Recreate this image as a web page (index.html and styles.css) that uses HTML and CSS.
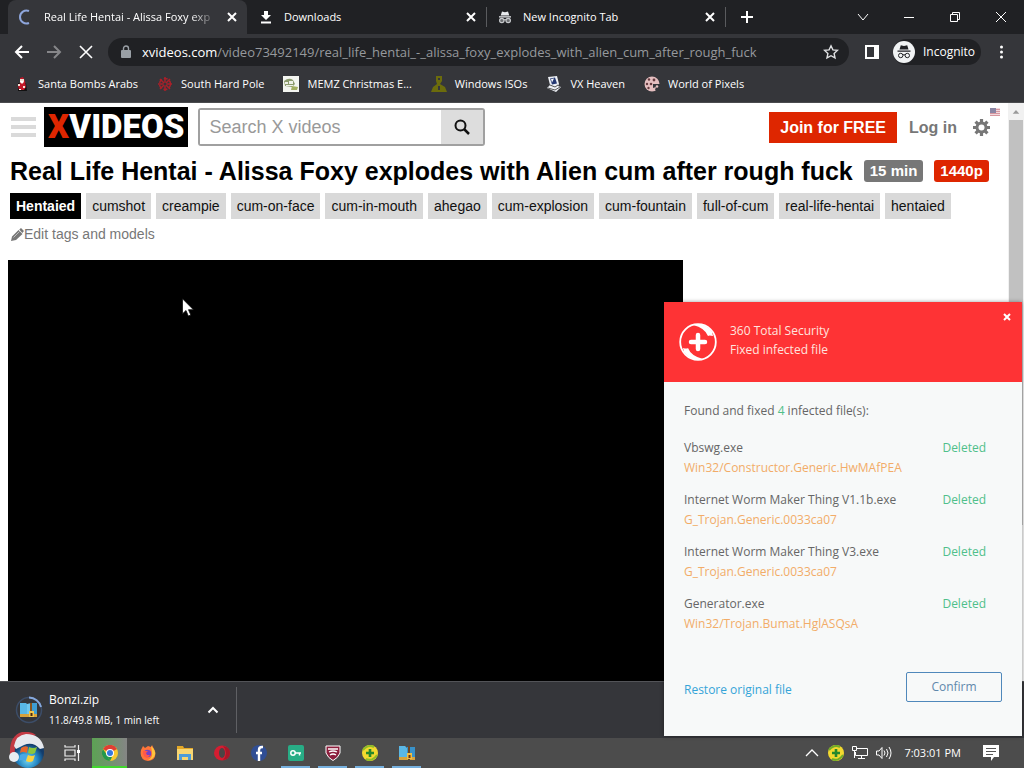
FILE: index.html
```html
<!DOCTYPE html>
<html lang="en">
<head>
<meta charset="utf-8">
<meta name="viewport" content="width=device-width, initial-scale=1">
<title>Real Life Hentai - Alissa Foxy</title>
<link rel="stylesheet" href="styles.css">
</head>
<body>
<header class="browser">
  <div class="tabs">
    <div class="tab tab-active">
      <svg class="ic" viewBox="0 0 16 16"><path d="M11 2A6.500 6.500 0 1 0 11 14" fill="none" stroke="#8ea6dc" stroke-width="2"/></svg>
      <span class="tab-title fade">Real Life Hentai - Alissa Foxy exp</span>
      <button class="x" aria-label="Close tab"><svg viewBox="0 0 10 10"><path d="M1 1l8 8M9 1L1 9"/></svg></button>
    </div>
    <div class="tab tab-second">
      <svg class="ic" viewBox="0 0 16 16"><path fill="#fff" d="M6 2h4v4h3l-5 5-5-5h3zM3 12.500h10v2H3z"/></svg>
      <span class="tab-title">Downloads</span>
      <button class="x" aria-label="Close tab"><svg viewBox="0 0 10 10"><path d="M1 1l8 8M9 1L1 9"/></svg></button>
    </div>
    <div class="tab tab-third">
      <svg class="ic" viewBox="0 0 16 16"><path fill="#e8eaed" d="M5 2.500l3 .8 3-.8 1.300 4H3.700zM2 7.300h12v1.200H2z"/><g fill="#6b6d70" stroke="#c8cacd" stroke-width="1.200"><circle cx="4.800" cy="11.500" r="2.200"/><circle cx="11.200" cy="11.500" r="2.200"/><path d="M7 11q1-.7 2 0"/></g></svg>
      <span class="tab-title">New Incognito Tab</span>
      <button class="x" aria-label="Close tab"><svg viewBox="0 0 10 10"><path d="M1 1l8 8M9 1L1 9"/></svg></button>
    </div>
    <button class="newtab" aria-label="New tab"><svg viewBox="0 0 12 12"><path d="M6 0v12M0 6h12" stroke="#fff" stroke-width="2"/></svg></button>
    <div class="winctl">
      <button aria-label="Search tabs"><svg viewBox="0 0 12 12"><path d="M1 3l5 6 5-6"/></svg></button>
      <button aria-label="Minimize"><svg viewBox="0 0 12 12"><path d="M1 6.500h10"/></svg></button>
      <button aria-label="Restore"><svg viewBox="0 0 12 12"><path d="M1.500 3.500h7v7h-7zM3.500 3.500v-2h7v7h-2"/></svg></button>
      <button aria-label="Close"><svg viewBox="0 0 12 12"><path d="M1 1l10 10M11 1L1 11"/></svg></button>
    </div>
  </div>
  <div class="toolbar">
    <button class="nav" aria-label="Back"><svg viewBox="0 0 16 16"><path d="M15 8H2M8 2L2 8l6 6"/></svg></button>
    <button class="nav dim" aria-label="Forward"><svg viewBox="0 0 16 16"><path d="M1 8h13M8 2l6 6-6 6"/></svg></button>
    <button class="nav" aria-label="Stop"><svg viewBox="0 0 16 16"><path d="M2 2l12 12M14 2L2 14"/></svg></button>
    <div class="omni">
      <svg class="lock" viewBox="0 0 12 14"><path fill="#9aa0a6" d="M2 5h8q1 0 1 1v6q0 1-1 1H2q-1 0-1-1V6q0-1 1-1z"/><path d="M3.500 6V3.500a2.500 2.500 0 0 1 5 0V6" fill="none" stroke="#9aa0a6" stroke-width="1.400"/></svg>
      <span class="url"><b>xvideos.com</b>/video73492149/real_life_hentai_-_alissa_foxy_explodes_with_alien_cum_after_rough_fuck</span>
      <button class="star" aria-label="Bookmark"><svg viewBox="0 0 16 16"><path d="M8 1.800l1.900 4.100 4.500.5-3.300 3.100.9 4.400L8 11.700l-4 2.200.9-4.400L1.600 6.400l4.500-.5z"/></svg></button>
    </div>
    <button class="panel" aria-label="Side panel"><svg viewBox="0 0 14 14"><path fill="#fff" fill-rule="evenodd" d="M0 0h14v14H0zM2 2v10h7V2z"/></svg></button>
    <button class="incog"><svg viewBox="0 0 22 22"><circle cx="11" cy="11" r="11" fill="#f1f3f4"/><path fill="#202124" d="M7.800 4.200l3.200.7 3.200-.7 1.300 4.200h-9zM4.500 9.500h13v1.200h-13z"/><g fill="none" stroke="#202124"><circle cx="7.700" cy="14.500" r="2.200"/><circle cx="14.300" cy="14.500" r="2.200"/><path d="M10 14q1-.6 2 0"/></g></svg><span>Incognito</span></button>
    <button class="menu" aria-label="Menu"><svg viewBox="0 0 4 16"><g fill="#fff"><circle cx="2" cy="3" r="1.500"/><circle cx="2" cy="8" r="1.500"/><circle cx="2" cy="13" r="1.500"/></g></svg></button>
  </div>
  <nav class="marks">
    <a href="#"><svg viewBox="0 0 16 16"><path fill="#111" d="M4 7l8 0 1 8H4z"/><path fill="#c21728" d="M6 2l3-1 2 4 1 6-2 3H5l-1-4 2-3z"/><path fill="#f2dfd5" d="M6 3h4v3l-2 2-2-2zM4 8h2v2H4zM9 10h2v2H9z"/><path fill="#fff" d="M6 5h3v2H7zM5 13h2v1H5z"/></svg>Santa Bombs Arabs</a>
    <a href="#"><svg viewBox="0 0 16 16"><g fill="none" stroke="#a8202a" stroke-width="1.500"><path d="M8 1v14M1 8h14M3 3l10 10M13 3L3 13"/><circle cx="8" cy="8" r="5.500" stroke-dasharray="4 2"/></g><circle cx="8" cy="8" r="1.500" fill="#35363a"/></svg>South Hard Pole</a>
    <a href="#"><svg viewBox="0 0 16 16"><path fill="#f3f5f0" d="M0 0h16v16H0z"/><path fill="#8b9b6d" d="M1 5q5-4 9-1l2 4-3 3-7-1z"/><path fill="#eef0e8" d="M2 6h3v2H2zM6 5h4v3H6zM3 9h7v1H3z"/><path fill="#a3af61" d="M9 10l6 1-1 3H8z"/></svg>MEMZ Christmas E...</a>
    <a href="#"><svg viewBox="0 0 16 16"><path fill="#6c6c0c" d="M5 0h6v5l-2 3 5 3 2 5H0l2-5 4-3-1-3z"/><path fill="#35363a" d="M7 2h2v2H7zM7 10h2v4H7z"/></svg>Windows ISOs</a>
    <a href="#"><svg viewBox="0 0 16 16"><path fill="#edf0f5" d="M2 1l9-1 2 8-1 2 3 1-5 5-9-4 3-3z"/><path fill="#243872" d="M4 2.500l5-1 2 6-5 1z"/><path d="M2 12l7 2 5-3M4 9l5 2 3-2" fill="none" stroke="#555"/><path fill="#fff" d="M5 3l3-.5-2 4z"/></svg>VX Heaven</a>
    <a href="#"><svg viewBox="0 0 16 16"><circle cx="8" cy="8" r="7.500" fill="#e5bfc0"/><g fill="#653a3e"><circle cx="5" cy="3.500" r="1.200"/><circle cx="10" cy="4" r="1.400"/><circle cx="3" cy="8" r="1.200"/><circle cx="7" cy="8" r="1.300"/><circle cx="4.500" cy="12" r="1.200"/></g><path fill="#35363a" d="M9 8h7v4l-3 3-2-1 1-3-3 1z"/><circle cx="13" cy="10.500" r="1.300" fill="#e5bfc0"/></svg>World of Pixels</a>
  </nav>
</header>
<main class="view">
  <div class="site">
    <div class="top">
      <button class="burger" aria-label="Menu"><svg viewBox="0 0 25 20"><path d="M0 2h25M0 10h25M0 18h25" stroke="#dadada" stroke-width="4"/></svg></button>
      <a class="logo" href="#"><i>X</i>VIDEOS</a>
      <form class="search">
        <input type="text" placeholder="Search X videos" aria-label="Search X videos">
        <button type="button" aria-label="Search"><svg viewBox="0 0 16 16"><circle cx="6.500" cy="6.500" r="5" fill="none" stroke="#111" stroke-width="2"/><path d="M10 10l5 5" stroke="#111" stroke-width="2.500"/></svg></button>
      </form>
      <a class="join" href="#">Join for FREE</a>
      <a class="login" href="#">Log in</a>
      <button class="gear" aria-label="Settings"><svg viewBox="0 0 18 18"><g stroke="#777" stroke-width="3.400"><path d="M9 0v18M0 9h18M2.700 2.700l12.600 12.600M15.300 2.700L2.700 15.300"/></g><circle cx="9" cy="9" r="6.300" fill="#777"/><circle cx="9" cy="9" r="3.200" fill="#fff"/></svg>
      <svg class="flag" viewBox="0 0 10 8"><path fill="#f3d9dd" d="M0 0h10v8H0z"/><path stroke="#d797a0" d="M0 1.500h10M0 3.500h10M0 5.500h10M0 7.500h10"/><path fill="#8b86a4" d="M0 0h6v5H0z"/></svg></button>
    </div>
    <h1>Real Life Hentai - Alissa Foxy explodes with Alien cum after rough fuck <span class="badge">15 min</span><span class="badge hd">1440p</span></h1>
    <div class="tags">
      <a class="main" href="#">Hentaied</a><a href="#">cumshot</a><a href="#">creampie</a><a href="#">cum-on-face</a><a href="#">cum-in-mouth</a><a href="#">ahegao</a><a href="#">cum-explosion</a><a href="#">cum-fountain</a><a href="#">full-of-cum</a><a href="#">real-life-hentai</a><a href="#">hentaied</a>
    </div>
    <a class="edit" href="#"><svg viewBox="0 0 13 13"><path fill="#777" d="M0 13l1-4.500L7.500 2l4 4L5 12zM8.300 1.500L10 0l3 3-1.700 2z"/><path d="M2.500 9.500l6-6" stroke="#ddd" stroke-width=".7"/></svg>Edit tags and models</a>
    <div class="player"></div>
  </div>
  <div class="scroll"><svg viewBox="0 0 15 17"><path fill="#999" d="M7.500 7l3.500 4H4z"/></svg><div class="thumb"></div></div>
</main>
<footer class="shelf">
  <svg class="dl" viewBox="0 0 28 28"><circle cx="14" cy="14" r="12.500" fill="none" stroke="#3c4d68" stroke-width="1.500"/><path d="M14 1.500A12.500 12.500 0 0 1 26 11" fill="none" stroke="#86a8dd" stroke-width="2"/><path fill="#58b7e5" d="M5 7h6l2 2v11H5z"/><path fill="#6fc7ee" d="M12 8l4-1v12h-4z"/><path fill="#3e9dd2" d="M17 7h5v13h-5z"/><path fill="#d6a13c" d="M5 18h17v3H5z"/><path fill="#88551e" d="M15 7h2v9h-2z"/><path fill="#f1c64c" d="M14 15h5v6h-5z"/><path fill="#4b2a10" d="M15.500 17h2v3h-2z"/></svg>
  <div class="dltext"><div class="fname">Bonzi.zip</div><div class="fstat">11.8/49.8 MB, 1 min left</div></div>
  <button class="up" aria-label="Options"><svg viewBox="0 0 12 8"><path d="M1.500 6.500L6 2l4.500 4.500" fill="none" stroke="#fff" stroke-width="2"/></svg></button>
</footer>
<div class="taskbar">
  <button class="start" aria-label="Start"><svg viewBox="0 0 38 36"><defs><radialGradient id="orb" cx=".5" cy=".75"><stop offset="0" stop-color="#75d8f2"/><stop offset=".6" stop-color="#2385c2"/><stop offset="1" stop-color="#123c6b"/></radialGradient></defs><circle cx="20" cy="20" r="16" fill="url(#orb)"/><path fill="#e7672c" d="M13 16q4-3 7-1l-1 6q-4-2-7 0z"/><path fill="#8cc63c" d="M21 15q4 2 8 0l-2 6q-3 2-7 0z"/><path fill="#49a8e5" d="M12 23q3-2 7 0l-1 6q-4-2-7 0z"/><path fill="#fbd13d" d="M20 23q4 2 7 0l-2 6q-3 2-7 0z"/><path fill="#c33a44" d="M2 22Q1 4 14 0q9-1 14 3L10 10q-4 3-3 12z"/><path fill="#e6e9ee" d="M6 14Q8 3 18 2q15 0 18 14l-4 1q-7-8-16-4l-8 4z"/><circle cx="6" cy="25" r="5" fill="#e9edf2"/></svg></button>
  <button class="task" aria-label="Task view"><svg viewBox="0 0 16 16"><g fill="none" stroke="#eee" stroke-width="1.200"><path d="M1 0v2h10V0M1 5h10v6H1zM1 16v-2h10v2M14.500 0v16"/></g><path fill="#fff" d="M13 5h3v3h-3z"/></svg></button>
  <button class="task on chrome" aria-label="Chrome"><svg viewBox="0 0 16 16"><circle cx="8" cy="8" r="8" fill="#f7c92d"/><path fill="#df3f35" d="M8 8L1 4a8 8 0 0 1 14 0z"/><path fill="#23984e" d="M8 16A8 8 0 0 1 1 4l4 6z"/><path fill="#23984e" d="M4 9l6 3-2 4z"/><circle cx="8" cy="8" r="4" fill="#fff"/><circle cx="8" cy="8" r="3" fill="#3478df"/></svg></button>
  <button class="task" aria-label="Firefox"><svg viewBox="0 0 16 16"><path fill="#ff7539" d="M1 5l2-4 2 2 3-2 3 1 1-2 3 6q2 9-7 10Q-1 15 1 5z"/><path fill="#ffc53c" d="M11 1q5 4 4 9-2 5-7 5 5-2 4-8z"/><circle cx="7.500" cy="8.500" r="3.700" fill="#7542c5"/><path fill="#ff5849" d="M3 6l5 0-2 2 1 2 3 0-3 3q-4-1-4-7z"/></svg></button>
  <button class="task" aria-label="File Explorer"><svg viewBox="0 0 16 16"><path fill="#e3a828" d="M0 1h6l1 2h9v3H0z"/><path fill="#f8d672" d="M0 4h16v11H0z"/><path fill="#4d9cd9" d="M2 9h12v6h-3v-3H5v3H2z"/></svg></button>
  <button class="task" aria-label="Opera"><svg viewBox="0 0 16 16"><ellipse cx="8" cy="8" rx="8" ry="7.500" fill="#d51d31"/><path fill="#a81828" d="M9 1q7 1 7 7t-7 7q3-3 3-7t-3-7z"/><ellipse cx="8" cy="8" rx="3" ry="5" fill="#4b4545"/></svg></button>
  <button class="task" aria-label="Facebook"><svg viewBox="0 0 16 16"><circle cx="8" cy="8" r="8" fill="#304e94"/><path d="M12 2h-1Q8 2 8 5v11M5 8h6" fill="none" stroke="#fff" stroke-width="2.400"/></svg></button>
  <button class="task on" aria-label="VPN"><svg viewBox="0 0 16 16"><rect width="16" height="16" rx="2" fill="#28ad86"/><circle cx="5" cy="8" r="2.200" fill="none" stroke="#fff" stroke-width="1.500"/><path d="M7 8h6M11.500 8v2.500" stroke="#fff" stroke-width="1.500"/></svg></button>
  <button class="task on" aria-label="Shield"><svg viewBox="0 0 16 16"><path fill="#8c1f3d" stroke="#fff" d="M1 1h14v7q-2 5-7 7.500Q3 13 1 8z"/><path d="M3 4h10M4 7q4-2 8 0M5 10q3-2 6 0" fill="none" stroke="#fff" stroke-width="1.300"/></svg></button>
  <button class="task on" aria-label="360 Total Security"><svg viewBox="0 0 16 16"><circle cx="8" cy="8" r="8" fill="#f3d92f"/><path d="M1 5Q6-1 12 2M4 14q6 3 11-4" fill="none" stroke="#8fbd28" stroke-width="2"/><path d="M8 4v8M4 8h8" stroke="#26882c" stroke-width="2.600"/></svg></button>
  <button class="task on" aria-label="Archive"><svg viewBox="0 0 16 16"><path fill="#5ab7e5" d="M0 1h6l2 2v10H0z"/><path fill="#3992c9" d="M8 2h8v11H8z"/><path fill="#d7a33d" d="M0 12h16v3H0z"/><path fill="#6d4726" d="M9 1h2v14H9z"/><path fill="#f0be43" d="M8 8h5v6H8z"/><path fill="#6b3113" d="M9.500 10h2v3h-2z"/></svg></button>
  <div class="tray">
    <svg viewBox="0 0 16 16"><path d="M2 11l6-6 6 6" fill="none" stroke="#fff" stroke-width="1.300"/></svg>
    <svg viewBox="0 0 16 16"><circle cx="8" cy="8" r="8" fill="#f3d92f"/><path d="M1 5Q6-1 12 2M4 14q6 3 11-4" fill="none" stroke="#72ad28" stroke-width="2"/><path d="M8 4v8M4 8h8" stroke="#26882c" stroke-width="2.600"/></svg>
    <svg viewBox="0 0 16 16"><path d="M5 3.500h10.500v7H3.500V7M9.500 10.500v3M6 13.500h7M.5 1.500h4v4h-4zM2.500 6v7" fill="none" stroke="#fff"/></svg>
    <svg viewBox="0 0 16 16"><path d="M.5 6h2.500l3-3.500v11L3 10H.5zM8 5.500q2 2.500 0 5M10.500 4q3 4 0 8M13 2q4 6 0 12" fill="none" stroke="#fff"/></svg>
    <time>7:03:01 PM</time>
    <svg class="note" viewBox="0 0 16 16"><path fill="#fff" d="M0 0h16v12h-5l-3 4v-4H0z"/><path d="M3 3.500h10M3 6.500h10M3 9.500h7" stroke="#555"/></svg>
  </div>
</div>
<svg class="cursor" viewBox="0 0 12 19"><path fill="#fff" stroke="#111" stroke-width=".8" d="M.5.800v15l3.500-3.300 2.300 5.500 2.500-1-2.300-5.300h4.900z"/></svg>
<section class="alert">
  <header>
    <svg class="shield" viewBox="0 0 38 38"><circle cx="19" cy="19" r="17.800" fill="none" stroke="#fff" stroke-width="1.800"/><path fill="#fff" d="M14 2Q26-1 33 9l1 4q-4-1-5 0-3-8-15-11zM24 36Q12 39 5 29l-1-4q4 1 5 0 3 8 15 11z"/><path d="M19 12v14M12 19h14" stroke="#fff" stroke-width="4.500" stroke-linecap="round"/></svg>
    <div><div>360 Total Security</div><div>Fixed infected file</div></div>
    <button class="close" aria-label="Close"><svg viewBox="0 0 8 8"><path d="M1 1l6 6M7 1L1 7" stroke="#fff" stroke-width="2"/></svg></button>
  </header>
  <div class="abody">
    <p>Found and fixed <em>4</em> infected file(s):</p>
    <ul>
      <li><div>Vbswg.exe<small>Win32/Constructor.Generic.HwMAfPEA</small></div><em>Deleted</em></li>
      <li><div>Internet Worm Maker Thing V1.1b.exe<small>G_Trojan.Generic.0033ca07</small></div><em>Deleted</em></li>
      <li><div>Internet Worm Maker Thing V3.exe<small>G_Trojan.Generic.0033ca07</small></div><em>Deleted</em></li>
      <li><div>Generator.exe<small>Win32/Trojan.Bumat.HglASQsA</small></div><em>Deleted</em></li>
    </ul>
    <div class="actions"><a href="#">Restore original file</a><button>Confirm</button></div>
  </div>
</section>
</body>
</html>
```
FILE: styles.css
```css
* { box-sizing: border-box; }
body { margin: 0; height: 100vh; display: flex; flex-direction: column; overflow: hidden; position: relative; background: #fff; font: 12px/16px "Open Sans", "Noto Sans", sans-serif; }
button { border: 0; padding: 0; background: none; font: inherit; color: inherit; display: flex; align-items: center; justify-content: center; }
a { color: inherit; text-decoration: none; }
svg { display: block; flex: none; }
em, i { font-style: normal; }

.browser { flex: none; background: #35363a; color: #fff; border-bottom: 1px solid #4a4b4e; }
.tabs { display: flex; align-items: center; height: 34px; background: #202124; }
.tab { display: flex; align-items: center; height: 34px; gap: 10px; }
.tab .ic { width: 16px; height: 16px; }
.tab-active { width: 239px; margin-left: 8px; padding: 0 10px; background: #35363a; border-radius: 8px 8px 0 0; }
.tab-second { width: 239px; padding: 0 10px 0 11px; }
.tab-third { width: 239px; padding: 0 10px 0 11px; }
.tab-third, .newtab { background: linear-gradient(#5a5b5e, #5a5b5e) left center / 1px 20px no-repeat; }
.tab-title { flex: 1; min-width: 0; white-space: nowrap; overflow: hidden; font-size: 11px; }
.fade { mask-image: linear-gradient(to right, #000 85%, transparent); }
.x svg { width: 10px; height: 10px; stroke: #fff; stroke-width: 2; }
.newtab { width: 44px; height: 34px; }
.newtab svg { width: 12px; height: 12px; }
.winctl { margin-left: auto; display: flex; height: 28px; }
.winctl button { width: 46px; }
.winctl svg { width: 12px; height: 12px; fill: none; stroke: #fff; }

.toolbar { display: flex; align-items: center; height: 36px; padding: 0 20px 0 14px; }
.nav { margin-right: 16px; }
.nav svg { width: 16px; height: 16px; fill: none; stroke: #fff; stroke-width: 2; }
.dim { opacity: .4; }
.nav:nth-child(3) { margin-right: 14px; }
.nav:nth-child(3) svg { stroke-width: 1.6; }
.omni { flex: 1; min-width: 0; height: 28px; display: flex; align-items: center; gap: 10px; padding: 0 10px 0 12px; border-radius: 14px; background: #202124; }
.lock { width: 12px; height: 14px; }
.url { flex: 1; min-width: 0; white-space: nowrap; overflow: hidden; color: #96999d; font-size: 13px; line-height: 20px; }
.url b { font-weight: 400; color: #fff; }
.star svg { width: 16px; height: 16px; fill: none; stroke: #e0e1e3; stroke-width: 1.4; }
.panel { margin-left: 16px; }
.panel svg { width: 14px; height: 14px; }
.incog { margin-left: 14px; height: 26px; width: 88px; justify-content: flex-start; gap: 8px; border-radius: 13px; background: #202124; }
.incog svg { width: 22px; height: 22px; }
.menu { margin-left: 18px; }
.menu svg { width: 5px; height: 16px; }
.marks { display: flex; align-items: center; height: 32px; padding: 0 14px 4px; gap: 19px; font-size: 11px; }
.marks a { display: flex; align-items: center; gap: 8px; white-space: nowrap; }
.marks svg { width: 16px; height: 16px; }

.view { flex: 1; min-height: 0; display: flex; font-family: "Liberation Sans", Arial, sans-serif; }
.site { flex: 1; min-width: 0; overflow: hidden; padding: 4px 8px 0; display: flex; flex-direction: column; }
.top { display: flex; align-items: center; height: 40px; padding: 0 10px 0 3px; }
.burger svg { width: 25px; height: 20px; }
.logo { margin-left: 8px; height: 40px; padding: 0 4px; background: #000; color: #fff; font: 900 33px/40px Roboto, sans-serif; }
.logo i { color: #de2600; }
.search { display: flex; width: 287px; height: 38px; margin-left: 10px; border: 2px solid #a0a0a0; border-radius: 3px; }
.search input { flex: 1; min-width: 0; border: 0; padding: 0 9px; font: 18px/24px "Liberation Sans", Arial, sans-serif; outline: 0; }
.search input::placeholder { color: #999; opacity: 1; }
.search button { width: 42px; background: #ddd; }
.search svg { width: 16px; height: 16px; }
.join { margin-left: auto; padding: 0 11px; background: #de2600; color: #fff; font-weight: 700; font-size: 16px; line-height: 31px; }
.login { margin: 0 16px 0 12px; color: #777; font-size: 16px; line-height: 31px; font-weight: 700; }
.gear { position: relative; }
.gear svg { width: 17px; height: 17px; }
.gear .flag { position: absolute; width: 10px; height: 8px; right: -10px; top: -11px; }
h1 { margin: 7px 0 0 2px; font-size: 25px; line-height: 34px; white-space: nowrap; display: flex; align-items: center; }
.badge { margin-left: 11px; padding: 0 6px; border-radius: 3px; background: #777; color: #fff; font-size: 15px; line-height: 22px; }
.hd { background: #de2600; }
.tags { display: flex; flex-wrap: wrap; gap: 5px; margin: 5px 0 0 2px; }
.tags a { padding: 0 6px; background: #d9d9d9; color: #111; font-size: 14px; line-height: 26px; }
.tags .main { background: #000; color: #fff; font-weight: 700; }
.edit { display: flex; align-items: center; margin: 5px 0 0 3px; color: #777; font-size: 14px; line-height: 20px; }
.edit svg { width: 13px; height: 13px; }
.player { flex: 1; width: 68%; margin-top: 16px; background: #000; }
.scroll { width: 16px; padding: 0 1px; display: flex; flex-direction: column; background: #f1f1f1; }
.scroll svg { height: 17px; }
.thumb { height: 70%; background: #c1c1c1; }

.shelf { flex: none; display: flex; align-items: center; height: 57px; padding-left: 15px; background: #35363a; border-top: 1px solid #535458; color: #fff; }
.dl { width: 28px; height: 28px; }
.dltext { margin-left: 6px; width: 152px; }
.fname { font-size: 12px; line-height: 20px; }
.fstat { font-size: 10px; line-height: 20px; }
.up { width: 36px; height: 46px; border-right: 1px solid #5f6064; justify-content: flex-start; padding-left: 6px; }
.up svg { width: 12px; height: 8px; }
.taskbar { flex: none; display: flex; align-items: flex-end; height: 30px; background: #4c4c4c; color: #fff; }
.start { width: 53px; }
.start svg { width: 38px; height: 36px; }
.task { width: 37px; height: 30px; border: solid #4c4c4c; border-width: 0 4px; }
.task svg { width: 16px; height: 16px; }
.on { box-shadow: inset 0 -2px #76b0de; }
.chrome { width: 39px; background: linear-gradient(to right, #5ca254, #858585); border-width: 0 2px; box-shadow: inset 0 -2px #41d62e; }
.tray { margin-left: auto; display: flex; align-items: center; gap: 8px; height: 30px; padding-right: 25px; }
.tray svg { width: 16px; height: 16px; }
.tray .note { margin-left: 14px; }
.tray time { margin-left: 4px; font-size: 11px; }

.cursor { position: absolute; left: 182px; top: 298px; width: 12px; height: 19px; }
.alert { position: absolute; right: 2px; bottom: 32px; width: 358px; background: #f7f9f9; box-shadow: 0 0 4px rgba(0,0,0,.4); color: #666; font: 400 12px/20px "Open Sans", "Noto Sans", sans-serif; }
.alert header { display: flex; align-items: center; gap: 13px; height: 80px; padding: 0 15px; background: #fe3335; color: #ffe3df; line-height: 19px; position: relative; }
.alert header > div { padding-bottom: 4px; }
.shield { width: 38px; height: 38px; }
.close { position: absolute; right: 11px; top: 11px; }
.close svg { width: 8px; height: 8px; }
.abody { padding: 19px 20px 34px; }
.abody p { margin: 0 0 17px; }
.abody em { color: #4fc08a; }
.abody ul { margin: 0; padding: 0; list-style: none; display: flex; flex-direction: column; gap: 12px; }
.abody li { display: flex; justify-content: space-between; padding-right: 16px; }
.abody small { display: block; font-size: 12px; color: #f2ac68; }
.actions { display: flex; justify-content: space-between; align-items: center; margin-top: 38px; }
.actions a { color: #35a4d8; padding-top: 5px; }
.actions button { width: 96px; height: 30px; border: 1px solid #4f88bb; border-radius: 2px; color: #6088ac; }
```
